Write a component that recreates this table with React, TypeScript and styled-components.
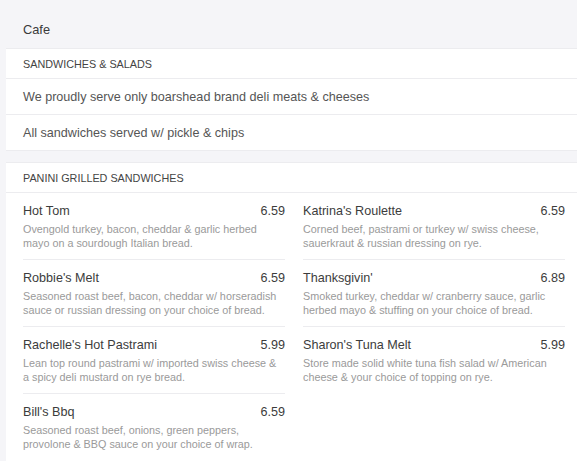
import React from "react";
import styled, { createGlobalStyle } from "styled-components";

const Global = createGlobalStyle`
  html, body { margin: 0; padding: 0; background: #f5f5f8; }
  body { font-family: "Liberation Sans", Arial, sans-serif; }
`;

const Page = styled.div`
  width: 577px;
  height: 461px;
  overflow: hidden;
  background: #f5f5f8;
  padding-left: 6px;
  box-sizing: border-box;
`;

const Header = styled.div`
  height: 48px;
  display: flex;
  align-items: center;
  padding: 10px 17px 0;
  box-sizing: border-box;
  font-size: 12.8px;
  color: #3a3a3a;
`;

const Card = styled.section<{ $gap?: number }>`
  background: #fff;
  border-top: 1px solid #ececef;
  border-bottom: 1px solid #ececef;
  margin-bottom: ${(p) => p.$gap ?? 0}px;
`;

const SectionTitle = styled.div`
  height: 29px;
  display: flex;
  align-items: center;
  padding: 0 17px;
  font-size: 10.8px;
  color: #444;
  text-transform: uppercase;
  border-bottom: 1px solid #ececef;
`;

const Row = styled.div<{ $last?: boolean }>`
  height: 35px;
  display: flex;
  align-items: center;
  padding: 0 17px;
  font-size: 12.6px;
  color: #555;
  border-bottom: ${(p) => (p.$last ? "none" : "1px solid #ececef")};
`;

const Grid = styled.div`
  display: grid;
  grid-template-columns: 262px 262px;
  column-gap: 18px;
  padding: 0 12px 0 17px;
`;

const Column = styled.div`
  display: flex;
  flex-direction: column;
`;

const Item = styled.div<{ $last?: boolean }>`
  height: 67px;
  box-sizing: border-box;
  padding-top: 9px;
  border-bottom: ${(p) => (p.$last ? "none" : "1px solid #ececef")};
`;

const ItemHead = styled.div`
  display: flex;
  justify-content: space-between;
  align-items: baseline;
  font-size: 12.6px;
  line-height: 18px;
  color: #3c3c3c;
  margin-bottom: 2px;
`;

const Desc = styled.div`
  font-size: 10.8px;
  line-height: 14px;
  color: #9a9a9a;
`;

type MenuItem = { name: string; price: string; desc: string };

const left: MenuItem[] = [
  { name: "Hot Tom", price: "6.59", desc: "Ovengold turkey, bacon, cheddar & garlic herbed mayo on a sourdough Italian bread." },
  { name: "Robbie's Melt", price: "6.59", desc: "Seasoned roast beef, bacon, cheddar w/ horseradish sauce or russian dressing on your choice of bread." },
  { name: "Rachelle's Hot Pastrami", price: "5.99", desc: "Lean top round pastrami w/ imported swiss cheese & a spicy deli mustard on rye bread." },
  { name: "Bill's Bbq", price: "6.59", desc: "Seasoned roast beef, onions, green peppers, provolone & BBQ sauce on your choice of wrap." },
];

const right: MenuItem[] = [
  { name: "Katrina's Roulette", price: "6.59", desc: "Corned beef, pastrami or turkey w/ swiss cheese, sauerkraut & russian dressing on rye." },
  { name: "Thanksgivin'", price: "6.89", desc: "Smoked turkey, cheddar w/ cranberry sauce, garlic herbed mayo & stuffing on your choice of bread." },
  { name: "Sharon's Tuna Melt", price: "5.99", desc: "Store made solid white tuna fish salad w/ American cheese & your choice of topping on rye." },
];

const renderColumn = (items: MenuItem[]) => (
  <Column>
    {items.map((it, i) => (
      <Item key={it.name} $last={i === items.length - 1}>
        <ItemHead>
          <span>{it.name}</span>
          <span>{it.price}</span>
        </ItemHead>
        <Desc>{it.desc}</Desc>
      </Item>
    ))}
  </Column>
);

export default function App() {
  return (
    <>
      <Global />
      <Page>
        <Header>Cafe</Header>
        <Card $gap={11}>
          <SectionTitle>Sandwiches &amp; Salads</SectionTitle>
          <Row>We proudly serve only boarshead brand deli meats &amp; cheeses</Row>
          <Row $last>All sandwiches served w/ pickle &amp; chips</Row>
        </Card>
        <Card>
          <SectionTitle>Panini Grilled Sandwiches</SectionTitle>
          <Grid>
            {renderColumn(left)}
            {renderColumn(right)}
          </Grid>
        </Card>
      </Page>
    </>
  );
}
